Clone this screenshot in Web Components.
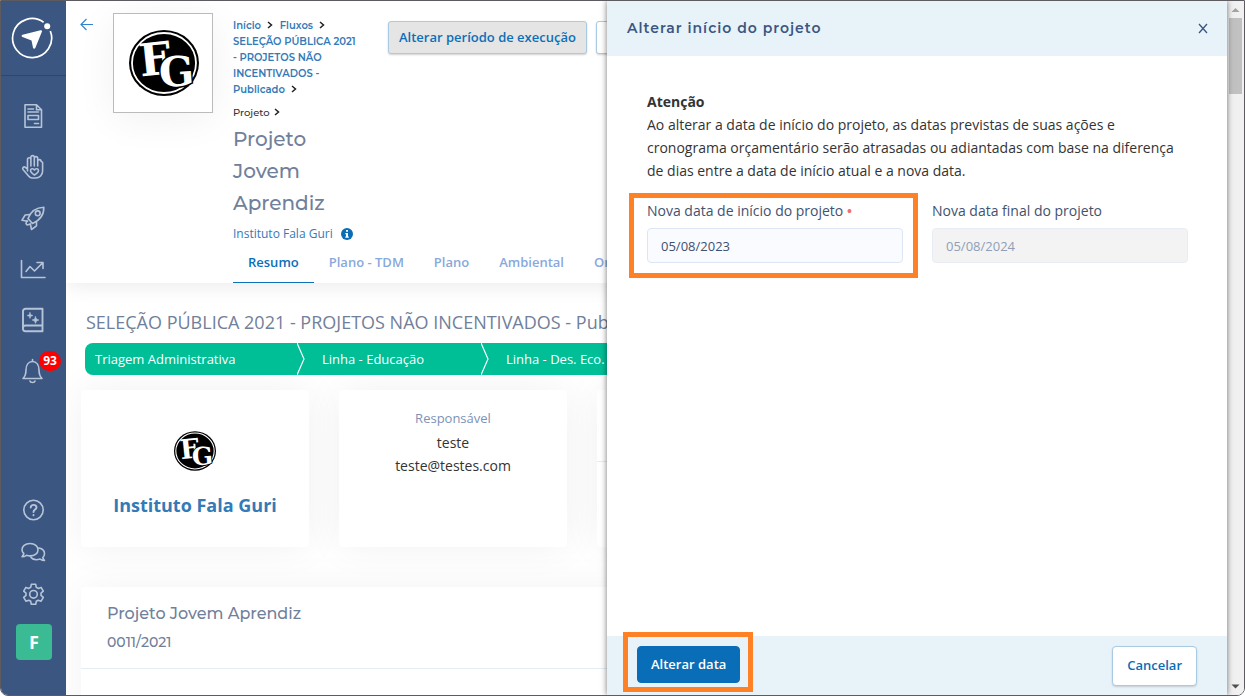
<!DOCTYPE html>
<html lang="pt-BR">
<head>
<meta charset="utf-8">
<title>Alterar início do projeto</title>
<style>
  html, body { margin: 0; height: 100%; }
  body { background: #fff; color: #333; font: 14px/23px "Open Sans", "Noto Sans", sans-serif; }
</style>
</head>
<body>
<app-shell></app-shell>

<script>
const define = (name, html) => {
  const template = document.createElement('template');
  template.innerHTML = `<style>*,*::before,*::after{box-sizing:border-box}:host{box-sizing:border-box}</style>${html}`;
  customElements.define(name, class extends HTMLElement {
    constructor() {
      super();
      this.attachShadow({ mode: 'open' }).append(template.content.cloneNode(true));
    }
  });
};

define('fg-logo', `
<style>
  :host { display: block; }
  svg { display: block; width: 100%; height: 100%; }
  text { font: bold 45px "DejaVu Serif", serif; fill: #fff; }
  .g { font-size: 41px; stroke: #000; stroke-width: 3px; paint-order: stroke; }
</style>
<svg viewBox="0 0 70 66" aria-hidden="true">
  <ellipse cx="35" cy="33" rx="35" ry="33" fill="#000"/>
  <ellipse cx="35" cy="33" rx="32" ry="30" fill="none" stroke="#fff" stroke-width="1.8"/>
  <text x="10" y="45" transform="rotate(-6 26 30)">F</text>
  <text class="g" x="30" y="56" transform="rotate(-4 48 42)">G</text>
</svg>`);

define('nav-icon', `
<style>
  :host { display: flex; align-items: center; justify-content: center; height: 51px; position: relative; color: #b7c4d8; }
  :host([compact]) { height: 42px; }
  a { display: flex; color: inherit; text-decoration: none; }
  ::slotted(svg) { display: block; width: 26px; height: 26px; fill: none; stroke: currentColor; stroke-width: 1.6; stroke-linecap: round; stroke-linejoin: round; }
  ::slotted(.badge) { position: absolute; top: 6px; right: 3px; width: 22px; height: 20px; border-radius: 11px; background: #f00; color: #fff; font-size: 12px; font-weight: 700; line-height: 20px; text-align: center; }
</style>
<a href="#"><slot></slot></a>`);

define('side-bar', `
<style>
  :host { display: flex; flex-direction: column; flex: 0 0 65px; background: #3b5680; }
  .brand { display: flex; justify-content: center; align-items: center; height: 75px; padding-right: 3px; border-bottom: 1px solid #2c4775; }
  .brand svg { width: 44px; height: 44px; display: block; }
  nav { padding-right: 2px; }
  nav.top { padding-top: 14px; }
  nav.bottom { margin-top: auto; padding-bottom: 35px; }
  .avatar { display: block; width: 36px; height: 36px; margin: 9px 0 0 15px; border: 0; border-radius: 4px; padding: 0; background: #3abb94; color: #fff; font: 700 18px/36px "Open Sans", sans-serif; }
</style>
<a class="brand" href="#" aria-label="Página inicial">
  <svg viewBox="0 0 44 44" fill="none"><path d="M33.6 6.3A19.5 19.5 0 1 0 40.3 15" stroke="#fff" stroke-width="1.7"/><circle cx="37.2" cy="10.3" r="3" fill="#fff"/><path d="M12.5 18.8 30.5 14.2c1.2-.3 1.9.5 1.4 1.6L25.3 32c-.6 1.2-2 1-2.3-.2l-1.5-7.3-9-3.5c-1.200-.5-1.200-1.800 0-2.200Z" fill="#fff"/></svg>
</a>
<nav class="top" aria-label="Principal">
  <nav-icon><svg viewBox="0 0 26 26"><path d="M5 1.800h11.500l5 5V24.200H5ZM16.500 1.800v5h5M8 6h5.500M8 9h10.500M8 12.500h10.500v4H8ZM14.500 20.500h4"/></svg></nav-icon>
  <nav-icon><svg viewBox="0 0 26 26"><path d="M7.500 17V5.500a1.700 1.700 0 0 1 3.400 0V12M10.900 12V3.300a1.700 1.700 0 0 1 3.400 0V12M14.300 12V4.300a1.700 1.700 0 0 1 3.400 0V12M17.700 12V7.300a1.700 1.700 0 0 1 3.400 0l1.500 1V17c0 4-3 7-7 7h-3.500c-1.500 0-2.500-.7-3.300-1.800L3 15.500c-1-1.700.7-3.200 2.300-2.200L7.500 15"/><path d="M14.500 21c-4-2.500-4-3.500-4-4.500 0-2 2.800-2.500 4-.5 1.200-2 4-1.500 4 .5 0 1-.5 2.300-4 4.500Z"/></svg></nav-icon>
  <nav-icon><svg viewBox="0 0 26 26"><path d="M8 13.500c2.500-6.500 7-11 15.800-11.300.3 8-4.300 13.200-11.300 16.300ZM8 13.500l4.500 5M9.500 9.500 5.200 10 2 15.200l5.500 1M16.500 16.500v4.300l-5 3.700-1.200-5.800M7 15.500l-1 3.200 1.200 1.300 3.300-1"/><circle cx="17.700" cy="8.300" r="2.400"/></svg></nav-icon>
  <nav-icon><svg viewBox="0 0 26 26"><path d="M1.500 4.500V21.500H25M6 15.500l4-5 4.500 4.500 8-8M17 6.500h6v6" /></svg></nav-icon>
  <nav-icon><svg viewBox="0 0 26 26"><path d="M5.500 1.800H22.500V24.200H5.500a2.500 2.500 0 0 1-2.500-2.500V4.300a2.500 2.500 0 0 1 2.500-2.500ZM3 20.500a2.500 2.500 0 0 1 2.500-2H22.500" stroke-width="1.900"/><path d="m10 5.500.8 2.200 2.200.8-2.200.8-.8 2.200-.8-2.200L7 8.500l2.200-.8ZM15.500 9.500l1 2.500 2.500 1-2.500 1-1 2.500-1-2.500-2.500-1 2.500-1Z" fill="currentColor" stroke-width=".5"/></svg></nav-icon>
  <nav-icon><svg viewBox="0 0 26 26"><path d="M12.500 1.500v2M3 20.500c2-2 3-4 3-8.500 0-5 2.500-8.500 6.500-8.500S19 7 19 12c0 4.500 1 6.500 3 8.500ZM10 23c.5 2 4.500 2 5 0"/></svg><span class="badge">93</span></nav-icon>
</nav>
<nav class="bottom" aria-label="Ajuda e conta">
  <nav-icon compact><svg viewBox="0 0 26 26"><circle cx="13.500" cy="13" r="9.700"/><path d="M10.700 10.500c.2-3.500 5.800-3.500 5.800 0 0 2-3 2.200-3 4.500M13.500 18v.2" stroke-width="1.900"/></svg></nav-icon>
  <nav-icon compact><svg viewBox="0 0 26 26"><path d="M10 4.500c5 0 8 2.800 8 6.200s-3 6.200-8 6.200c-1.300 0-2.500-.2-3.500-.6-1.500 1-3 1.400-4.500 1.400 1-1 1.600-2 1.800-3.200C2.500 13.500 2 12.200 2 10.700 2 7.300 5 4.500 10 4.500ZM19 9c3.500.7 5.500 3 5.500 5.700 0 1.500-.6 2.800-1.700 3.800.2 1.200.8 2.200 1.700 3-1.600 0-3-.4-4.300-1.400-4.200 1.200-8 .3-9.700-2.500"/></svg></nav-icon>
  <nav-icon compact><svg viewBox="0 0 26 26"><path d="M11.300 3.300h4.400l.6 3 1.900 1.100 2.900-1 2.200 3.800-2.300 2v2.200l2.300 2-2.200 3.800-2.900-1-1.900 1.100-.6 3h-4.400l-.6-3-1.900-1.100-2.900 1-2.200-3.800 2.300-2v-2.200l-2.300-2 2.200-3.800 2.900 1 1.900-1.100Z"/><circle cx="13.500" cy="13.300" r="3.800"/></svg></nav-icon>
  <button class="avatar" type="button">F</button>
</nav>`);

define('project-header', `
<style>
  :host { display: block; position: relative; padding: 12px 0 0 14px; background: #fff; box-shadow: 0 2px 20px rgba(0,0,0,.09); }
  .row { display: flex; align-items: flex-start; height: 234px; }
  a { color: #337ab7; text-decoration: none; }
  .back { width: 14px; height: 22px; margin-right: 19px; }
  .back svg { display: block; width: 14px; height: 22px; }
  .logo { display: flex; align-items: center; justify-content: center; flex: 0 0 100px; height: 100px; border: 1px solid #bbb; background: #fff; box-shadow: 0 6px 40px rgba(0,0,0,.06); margin-right: 20px; }
  fg-logo { width: 70px; height: 66px; margin-left: 2px; }
  .info { flex: 0 0 155px; font: 500 10px/16px Montserrat, Inter, sans-serif; }
  .crumbs, .here { margin: 0; }
  .crumbs { padding-top: 5px; white-space: nowrap; }
  .crumbs a { font-weight: 600; }
  .here { margin-top: 7px; color: #333; }
  .sep { width: 6px; height: 8px; margin: 0 4px 0 6px; fill: none; stroke: #222; stroke-width: 1.500; }
  .here .sep { margin: 0 4px; }
  h1 { margin: 2px 0 4px; width: 110px; font: 500 20px/32px Montserrat, Inter, sans-serif; color: #71809a; }
  .org { display: flex; align-items: center; gap: 8px; font: 12px/22px "Open Sans", sans-serif; }
  .org svg { width: 12px; height: 12px; display: block; }
  .actions { display: flex; gap: 9px; padding-top: 8px; }
  .actions button { height: 33px; padding: 0 10px 2px; border: 1px solid #a8cbe3; border-radius: 3px; background: #fff; color: #0c6fb8; font: 600 13px/20px "Open Sans", sans-serif; white-space: nowrap; box-shadow: 0 1px 2px rgba(0,0,0,.18); }
  .actions button.on { background: #e5e5e5; }
  .actions button.wide { width: 140px; }
  .tabs { display: flex; margin-left: 153px; height: 36px; }
  .tabs a { padding: 4px 15px 0; font-weight: 600; font-size: 13px; line-height: 22px; color: #89a9dc; white-space: nowrap; }
  .tabs a[aria-current] { color: #0c6fb8; border-bottom: 1px solid #0c6fb8; }
</style>
<div class="row">
  <a class="back" href="#" aria-label="Voltar"><svg viewBox="0 0 14 22" fill="none" stroke="#3186cf" stroke-width="1.200"><path d="M13 11.500H1M6.500 6 1 11.500 6.500 17"/></svg></a>
  <div class="logo"><fg-logo></fg-logo></div>
  <div class="info">
    <p class="crumbs"><a href="#">Início</a><svg class="sep" viewBox="0 0 6 8"><path d="m1 1 3.500 3L1 7"/></svg> <a href="#">Fluxos</a><svg class="sep" viewBox="0 0 6 8"><path d="m1 1 3.500 3L1 7"/></svg><br><a href="#">SELEÇÃO PÚBLICA 2021<br>- PROJETOS NÃO<br>INCENTIVADOS -<br>Publicado</a><svg class="sep" viewBox="0 0 6 8"><path d="m1 1 3.500 3L1 7"/></svg></p>
    <p class="here">Projeto<svg class="sep" viewBox="0 0 6 8"><path d="m1 1 3.500 3L1 7"/></svg></p>
    <h1>Projeto Jovem Aprendiz</h1>
    <div class="org"><a href="#">Instituto Fala Guri</a><svg viewBox="0 0 12 12" aria-hidden="true"><circle cx="6" cy="6" r="6" fill="#0a6db7"/><path d="M5 2h2v1.800H5ZM4.300 5H7v3.500h.8v1.200H4.300V8.500H5V6.200h-.7Z" fill="#fff"/></svg></div>
  </div>
  <div class="actions"><button class="on" type="button">Alterar período de execução</button><button class="wide" type="button" aria-label="Mais ações"></button></div>
</div>
<nav class="tabs" aria-label="Seções do projeto">
  <a href="#" aria-current="page">Resumo</a><a href="#">Plano - TDM</a><a href="#">Plano</a><a href="#">Ambiental</a><a href="#">Orçamento</a>
</nav>`);

define('step-bar', `
<style>
  :host { display: block; }
  ol { display: flex; margin: 0; padding: 0; list-style: none; height: 32px; border-radius: 8px; overflow: hidden; background: #00be96; color: #fff; font-size: 13px; line-height: 32px; }
  li { display: flex; justify-content: space-between; flex: 0 0 184px; padding-left: 17px; white-space: nowrap; }
  li:first-child { flex-basis: 220px; padding-left: 10px; }
  svg { width: 8px; height: 32px; fill: none; stroke: #fff; stroke-width: 1.200; }
</style>
<ol>
  <li>Triagem Administrativa<svg viewBox="0 0 8 32"><path d="M0 0 7 16 0 32"/></svg></li>
  <li>Linha - Educação<svg viewBox="0 0 8 32"><path d="M0 0 7 16 0 32"/></svg></li>
  <li>Linha - Des. Eco.</li>
</ol>`);

define('info-card', `
<style>
  :host { display: flex; flex-direction: column; align-items: center; background: #fff; border-radius: 4px; box-shadow: 0 0 40px rgba(0,0,0,.06); height: 157px; }
</style>
<slot></slot>`);

define('project-summary', `
<style>
  :host { display: block; padding: 25px 15px 0; }
  h2 { margin: 0 5px; font-weight: 400; font-size: 18px; line-height: 28px; color: #71809a; white-space: nowrap; }
  step-bar { margin: 7px 4px 15px; position: relative; }
  .cards { display: grid; grid-template-columns: repeat(auto-fill, 228px); gap: 30px; }
  fg-logo { width: 42px; height: 40px; margin-top: 41px; }
  .org { margin-top: 20px; font-weight: 700; font-size: 18px; line-height: 28px; color: #337ab7; text-decoration: none; }
  .label { margin-top: 17px; font-size: 13px; color: #7d92b5; }
  .label + span { margin-top: 1px; }
  hr { width: 100%; margin: 71px 0 0; border: 0; border-top: 1px solid #e3edf6; }
  section { position: relative; height: 260px; margin-top: 40px; background: #fff; border-radius: 4px; box-shadow: 0 0 40px rgba(0,0,0,.05); font-family: Montserrat, Inter, sans-serif; color: #71809a; }
  header { height: 82px; padding: 13px 26px 0; border-bottom: 1px solid #e3edf6; }
  h3 { margin: 0; font-weight: 500; font-size: 16px; line-height: 28px; }
  p { margin: 0; font-weight: 500; font-size: 14px; line-height: 28px; }
</style>
<h2>SELEÇÃO PÚBLICA 2021 - PROJETOS NÃO INCENTIVADOS - Publicado</h2>
<step-bar></step-bar>
<div class="cards">
  <info-card><fg-logo></fg-logo><a class="org" href="#">Instituto Fala Guri</a></info-card>
  <info-card><span class="label">Responsável</span><span>teste</span><span>teste@testes.com</span></info-card>
  <info-card><hr></info-card>
</div>
<section><header><h3>Projeto Jovem Aprendiz</h3><p>0011/2021</p></header></section>`);

define('date-field', `
<style>
  :host { display: block; position: relative; color: #42526e; }
  :host([marked])::after { content: ""; position: absolute; inset: -7px -15px -15px -18px; border: 5px solid #ff8126; pointer-events: none; }
  ::slotted(label) { display: block; line-height: 22px; }
  ::slotted(input) { box-sizing: border-box; display: block; width: 100%; height: 35px; margin: 6px 0 0; padding: 0 13px; border: 1px solid #dce6f5; border-radius: 4px; background: #fafbff; color: #3d5070; font: 13px/20px "Open Sans", sans-serif; }
  ::slotted(input:disabled) { background: #f3f3f3; border-color: #e8ecf5; color: #8f9fb8; }
</style>
<slot></slot>`);

define('side-drawer', `
<style>
  :host { display: flex; flex-direction: column; background: #fff; box-shadow: 0 0 6px rgba(0,0,0,.55); }
  header { display: flex; align-items: center; justify-content: space-between; flex: 0 0 55px; padding: 0 18px 1px 20px; background: #e7f2f9; }
  h2 { margin: 0; font: 600 14px/22px Montserrat, Inter, sans-serif; letter-spacing: 1px; color: #3b5680; }
  .close { width: 12px; height: 24px; padding: 0; border: 0; background: none; }
  .close svg { display: block; width: 12px; height: 24px; }
  main { flex: 1; padding: 34px 39px 0 40px; }
  p { margin: 0 0 18px; }
  strong { display: block; color: #333; }
  .fields { display: grid; grid-template-columns: 1fr 1fr; gap: 29px; }
  .dot { color: #f36c6c; font-family: "Liberation Sans", sans-serif; }
  footer { display: flex; justify-content: space-between; align-items: flex-start; flex: 0 0 59px; padding: 10px 30px 0; background: #e7f2f9; }
  footer button { padding: 0 14px 2px; border: 1px solid #a8cbe3; border-radius: 4px; background: #fff; color: #0a6db7; font: 600 13px/20px "Open Sans", sans-serif; height: 40px; box-shadow: 0 1px 2px rgba(0,0,0,.15); }
  .marked { position: relative; }
  .marked::after { content: ""; position: absolute; inset: -14px -13px -9px -14px; border: 5px solid #ff8126; pointer-events: none; }
  .marked button { display: block; height: 37px; padding: 0 13px 2px; background: #0a6db7; border-color: #0a6db7; color: #fff; box-shadow: none; }
</style>
<header><h2>Alterar início do projeto</h2><button class="close" type="button" aria-label="Fechar"><svg viewBox="0 0 12 24" fill="none" stroke="#3b5680" stroke-width="1.300"><path d="m2 8 8 9M10 8l-8 9"/></svg></button></header>
<main>
  <p><strong>Atenção</strong>Ao alterar a data de início do projeto, as datas previstas de suas ações e cronograma orçamentário serão atrasadas ou adiantadas com base na diferença de dias entre a data de início atual e a nova data.</p>
  <div class="fields">
    <date-field marked><label for="start">Nova data de início do projeto <span class="dot">•</span></label><input id="start" type="text" value="05/08/2023"></date-field>
    <date-field><label for="end">Nova data final do projeto</label><input id="end" type="text" value="05/08/2024" disabled></date-field>
  </div>
</main>
<footer><div class="marked"><button type="button">Alterar data</button></div><button type="button">Cancelar</button></footer>`);

define('scroll-track', `
<style>
  :host { display: flex; flex-direction: column; flex: 0 0 17px; align-items: center; background: #f1f1f1; }
  svg { display: block; width: 17px; height: 17px; }
  .thumb { width: 13px; height: 76px; background: #c1c1c1; }
  .down { margin-top: auto; }
</style>
<svg viewBox="0 0 17 17"><path d="M4.500 11 8.500 7l4 4Z" fill="#a3a3a3"/></svg>
<div class="thumb"></div>
<svg class="down" viewBox="0 0 17 17"><path d="M4.500 6.500l4 4 4-4Z" fill="#505050"/></svg>`);

define('app-shell', `
<style>
  :host { display: flex; height: 100vh; border: 1px solid #5d5b60; border-radius: 0 0 8px 8px; overflow: hidden; position: relative; background: #fff; }
  .stage { position: relative; display: flex; flex: 1; min-width: 0; }
  .page { flex: 1; min-width: 0; overflow: hidden; }
  side-drawer { position: absolute; top: 0; right: 0; bottom: 0; width: min(620px, 100%); }
</style>
<div class="stage">
  <side-bar></side-bar>
  <div class="page"><project-header></project-header><project-summary></project-summary></div>
  <side-drawer></side-drawer>
</div>
<scroll-track></scroll-track>`);
</script>
</body>
</html>
